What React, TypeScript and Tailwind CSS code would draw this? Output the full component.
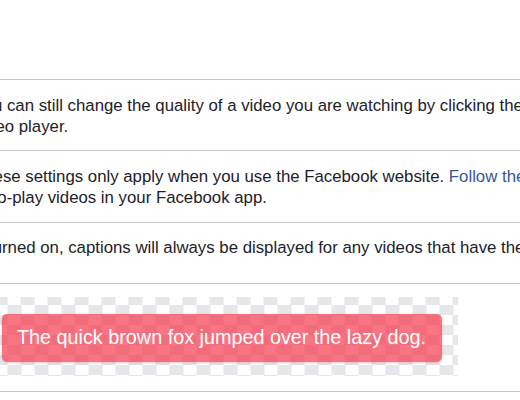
export default function App() {
  return (
    <div className="w-[520px] h-[400px] overflow-hidden bg-white font-['Liberation_Sans',Arial,sans-serif] text-[#1d2129]">
      <div className="pt-[79px] -ml-[26px] w-[660px]">
        <div className="border-t border-[#c6c7ca] pt-[15px] pb-[13px] text-[16.8px] leading-[21px] whitespace-nowrap">
          <p>You can still change the quality of a video you are watching by clicking the</p>
          <p>video player.</p>
        </div>

        <div className="border-t border-[#c6c7ca] pt-[15px] pb-[14px] text-[16.8px] leading-[21px] whitespace-nowrap">
          <p>
            These settings only apply when you use the Facebook website.{" "}
            <span className="text-[#365899]">Follow these steps</span>
          </p>
          <p>auto-play videos in your Facebook app.</p>
        </div>

        <div className="border-t border-[#c6c7ca] pt-[14px] pb-[25px] text-[16.8px] leading-[21px] whitespace-nowrap">
          <p>If turned on, captions will always be displayed for any videos that have them.</p>
        </div>

        <div className="border-t border-[#c6c7ca] pt-[13px] pb-[15px] border-b">
          <div className="w-[484px] pt-[17px] pb-[14px] pl-[28px] bg-[repeating-conic-gradient(#e6e7ea_0%_25%,#ffffff_0%_50%)] bg-[length:27px_20px] bg-[position:6.5px_-2px]">
            <div className="inline-flex h-[48px] items-center rounded-[5px] bg-[rgba(248,52,72,0.68)] pl-[15px] pr-[16px] shadow-[0_1px_3px_rgba(200,40,60,0.25)]">
              <span className="text-[19.8px] leading-none text-white whitespace-nowrap">
                The quick brown fox jumped over the lazy dog.
              </span>
            </div>
          </div>
        </div>
      </div>
    </div>
  );
}
